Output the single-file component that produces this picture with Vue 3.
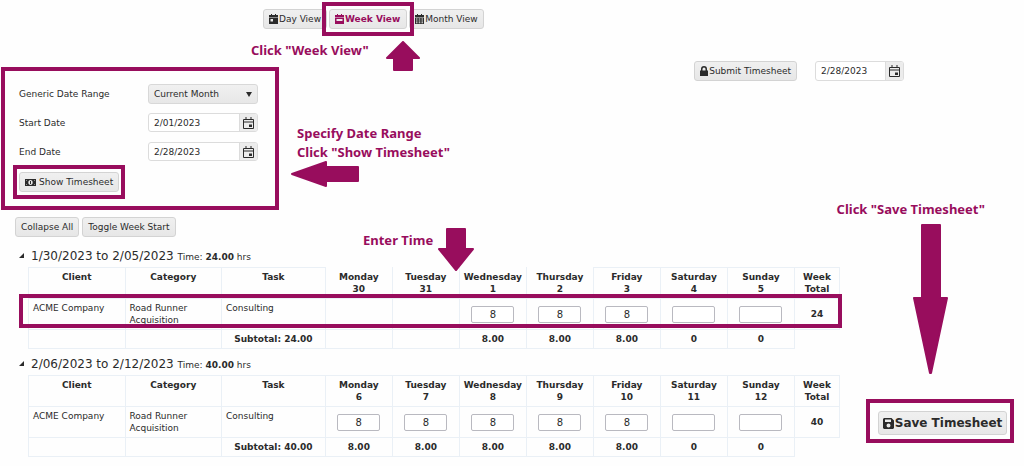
<script setup>
import { ref } from 'vue'

const range = ref('Current Month')
const startDate = ref('2/01/2023')
const endDate = ref('2/28/2023')
const submitDate = ref('2/28/2023')
const dayNames = ['Monday', 'Tuesday', 'Wednesday', 'Thursday', 'Friday', 'Saturday', 'Sunday']

const weeks = ref([
  {
    id: 'w1', title: '1/30/2023 to 2/05/2023', total: '24', hours: '24.00', marked: true,
    dates: [30, 31, 1, 2, 3, 4, 5],
    entries: [null, null, '8', '8', '8', '', ''],
    sums: ['', '', '8.00', '8.00', '8.00', '0', '0'],
  },
  {
    id: 'w2', title: '2/06/2023 to 2/12/2023', total: '40', hours: '40.00', marked: false,
    dates: [6, 7, 8, 9, 10, 11, 12],
    entries: ['8', '8', '8', '8', '8', '', ''],
    sums: ['8.00', '8.00', '8.00', '8.00', '8.00', '0', '0'],
  },
])
</script>

<template>
  <main class="page">
    <nav class="views">
      <button class="btn" type="button">
        <svg class="icon" viewBox="0 0 9 10"><path fill-rule="evenodd" d="M0 1h2V0h1v1h3V0h1v1h2v2H0zM0 3.5h9V10H0zM1.5 5v2.5H4V5z" /></svg>Day View
      </button>
      <button class="btn active marked" type="button">
        <svg class="icon" viewBox="0 0 9 10"><path fill-rule="evenodd" d="M0 1h2V0h1v1h3V0h1v1h2v2H0zM0 3.5h9V10H0zM1.5 5v2h6V5z" /></svg>Week View
      </button>
      <button class="btn" type="button">
        <svg class="icon" viewBox="0 0 9 10"><path fill-rule="evenodd" d="M0 1h2V0h1v1h3V0h1v1h2v2H0zM0 3.5h9V10H0zM1 4.5v1h1.5v-1zm2.7 0v1h1.6v-1zm2.8 0v1H8v-1zM1 6.5v1h1.5v-1zm2.7 0v1h1.6v-1zm2.8 0v1H8v-1zM1 8.3v.9h1.5v-.9zm2.7 0v.9h1.6v-.9zm2.8 0v.9H8v-.9z" /></svg>Month View
      </button>
    </nav>

    <section class="top">
      <form class="filters" @submit.prevent>
        <div class="field">
          <label for="range">Generic Date Range</label>
          <div class="select-wrap">
            <select id="range" v-model="range">
              <option>Current Month</option>
            </select>
            <svg class="caret" viewBox="0 0 6 5"><path d="M0 0h6L3 5z" /></svg>
          </div>
        </div>
        <div class="field">
          <label for="start">Start Date</label>
          <div class="date">
            <input id="start" v-model="startDate" type="text" />
            <button type="button" aria-label="Pick start date">
              <svg viewBox="0 0 11 12"><path class="line" d="M.5 2.5h10v9H.5zM.5 5h10M3 0v3M8 0v3" /><path d="M6 7.5h3V10H6z" /></svg>
            </button>
          </div>
        </div>
        <div class="field">
          <label for="end">End Date</label>
          <div class="date">
            <input id="end" v-model="endDate" type="text" />
            <button type="button" aria-label="Pick end date">
              <svg viewBox="0 0 11 12"><path class="line" d="M.5 2.5h10v9H.5zM.5 5h10M3 0v3M8 0v3" /><path d="M6 7.5h3V10H6z" /></svg>
            </button>
          </div>
        </div>
        <button class="btn show marked" type="submit">
          <svg class="icon money" viewBox="0 0 11 7"><path fill-rule="evenodd" d="M0 0h11v7H0zM1 1v1l1-1zm9 0H9l1 1zM1 6h1L1 5zm9 0V5L9 6zM5.5 1C4.100 1 3.300 2.200 3.300 3.500S4.100 6 5.500 6s2.200-1.200 2.200-2.500S6.900 1 5.500 1z" /><path d="M5 2h1v3H5z" /></svg>Show Timesheet
        </button>
      </form>

      <div class="submit">
        <button class="btn" type="button">
          <svg class="icon lock" viewBox="0 0 8 10"><path fill-rule="evenodd" d="M0 4.500h1V3a3 3 0 0 1 6 0v1.500h1V10H0zM2.500 4.500h3V3a1.500 1.500 0 0 0-3 0z" /></svg>Submit Timesheet
        </button>
        <div class="date">
          <input v-model="submitDate" type="text" aria-label="Submit date" />
          <button type="button" aria-label="Pick submit date">
            <svg viewBox="0 0 11 12"><path class="line" d="M.5 2.5h10v9H.5zM.5 5h10M3 0v3M8 0v3" /><path d="M6 7.5h3V10H6z" /></svg>
          </button>
        </div>
      </div>
    </section>

    <div class="tools">
      <button class="btn" type="button">Collapse All</button>
      <button class="btn" type="button">Toggle Week Start</button>
    </div>

    <div class="body">
      <div class="weeks">
        <section v-for="week in weeks" :key="week.id" class="week">
          <h2>
            <svg class="toggle" viewBox="0 0 5 5"><path d="M5 0v5H0z" /></svg>
            {{ week.title }} <small>Time: <b>{{ week.hours }}</b> hrs</small>
          </h2>
          <div class="sheet">
            <table>
              <colgroup>
                <col class="c-name" /><col class="c-name" /><col class="c-task" />
                <col v-for="d in dayNames" :key="d" /><col class="c-total" />
              </colgroup>
              <thead>
                <tr>
                  <th>Client</th><th>Category</th><th>Task</th>
                  <th v-for="(d, i) in dayNames" :key="d" :class="{ bare: week.marked && i < 4 }">{{ d }}<br />{{ week.dates[i] }}</th>
                  <th>Week<br />Total</th>
                </tr>
              </thead>
              <tbody>
                <tr class="entry">
                  <td>ACME Company</td><td>Road Runner Acquisition</td><td>Consulting</td>
                  <td v-for="(d, i) in dayNames" :key="d" class="num">
                    <input v-if="week.entries[i] !== null" v-model="week.entries[i]" type="text" :aria-label="d + ' hours'" />
                  </td>
                  <td class="num">{{ week.total }}</td>
                </tr>
                <tr class="sum">
                  <td></td><td></td><td class="num">Subtotal: {{ week.hours }}</td>
                  <td v-for="(d, i) in dayNames" :key="d" class="num">{{ week.sums[i] }}</td>
                  <td class="none"></td>
                </tr>
              </tbody>
            </table>
            <div v-if="week.marked" class="row-mark"></div>
          </div>
        </section>
      </div>
      <div class="save">
        <button class="btn" type="button">
          <svg class="icon disk" viewBox="0 0 11 11"><path fill-rule="evenodd" d="M1 0h7.500L11 2.500V10l-1 1H1l-1-1V1zM2 1.500V4h6V1.500zM5.500 5.500a2 2 0 1 0 0 4 2 2 0 0 0 0-4z" /></svg>Save Timesheet
        </button>
      </div>
    </div>

    <p class="note n-week">Click "Week View"</p>
    <svg class="arrow a-week" viewBox="0 0 34 30"><path d="M17 1 33 17H26V29H8V17H1z" /></svg>
    <p class="note n-range">Specify Date Range<br />Click "Show Timesheet"</p>
    <svg class="arrow a-range" viewBox="0 0 68 26"><path d="M1 13 35 1V6H67V20H35V25z" /></svg>
    <p class="note n-time">Enter Time</p>
    <svg class="arrow a-time" viewBox="0 0 36 43"><path d="M9 1H27V21H35L18 42 1 21H9z" /></svg>
    <p class="note n-save">Click "Save Timesheet"</p>
    <svg class="arrow a-save" viewBox="0 0 35 150"><path d="M9 1H27V74H34L18 149H17L1 74H9z" /></svg>
  </main>
</template>

<style>
body {
  margin: 0;
  background: #fefefe;
}
</style>

<style scoped>
.page {
  --mark: #980d5d;
  --line: #eaf0f6;
  position: relative;
  box-sizing: border-box;
  padding-top: 9px;
  color: #2b2b2b;
  font: 9px/12px "DejaVu Sans", sans-serif;
}
.page * { box-sizing: border-box; }
button, input, select { font: inherit; color: inherit; margin: 0; }
svg { display: block; fill: currentColor; flex: none; }
.btn {
  display: inline-flex;
  align-items: center;
  justify-content: center;
  gap: 1px;
  height: 20px;
  padding: 0 5px;
  border: 1px solid #d3d3d3;
  border-radius: 3px;
  background: linear-gradient(#f0f0f0, #e7e7e7);
  white-space: nowrap;
}
.icon { width: 9px; height: 10px; }
.marked { position: relative; }
.marked::after {
  content: "";
  position: absolute;
  inset: -8px;
  border: 4px solid var(--mark);
  pointer-events: none;
}
.views { display: flex; gap: 2px; padding-left: 263px; }
.views .active { padding-right: 6px; color: var(--mark); font-weight: bold; z-index: 1; }
.top {
  display: flex;
  justify-content: space-between;
  align-items: flex-start;
  margin-top: 32px;
  padding: 0 120px 0 1px;
}
.filters {
  display: flex;
  flex-direction: column;
  align-items: flex-start;
  gap: 10px;
  width: 278px;
  margin-top: 6px;
  padding: 13px 17px 14px 14px;
  border: 4px solid var(--mark);
}
.field {
  display: flex;
  align-items: center;
  justify-content: space-between;
  align-self: stretch;
  height: 19px;
}
.select-wrap { position: relative; width: 110px; }
select {
  appearance: none;
  width: 100%;
  height: 20px;
  padding: 0 5px;
  border: 1px solid #d8d8d8;
  border-radius: 3px;
  background: linear-gradient(#f0f0f0, #e7e7e7);
}
.caret { position: absolute; right: 6px; top: 8px; width: 6px; height: 5px; pointer-events: none; }
.date {
  display: flex;
  width: 110px;
  height: 19px;
  border: 1px solid #dcdcdc;
  border-radius: 3px;
  background: #fff;
  overflow: hidden;
}
.date input { flex: 1; min-width: 0; border: 0; padding: 0 5px; background: transparent; }
.date button {
  display: grid;
  place-items: center;
  width: 18px;
  padding: 0;
  border: 0;
  border-left: 1px solid #dcdcdc;
  background: #ececec;
}
.date svg { width: 11px; height: 12px; }
.line { fill: none; stroke: currentColor; }
.show { gap: 3px; margin-top: 1px; }
.show.marked::after { inset: -8px -7px -8px -7px; }
.money { width: 11px; height: 7px; }
.submit { display: flex; gap: 18px; }
.submit .date { width: 89px; height: 20px; }
.lock { width: 8px; }
.tools { display: flex; gap: 3px; margin-top: 7px; padding-left: 15px; }
.body { display: flex; align-items: flex-end; }
.weeks { flex: 1; padding: 10px 26px 0 28px; }
.week { margin-bottom: 6px; }
h2 {
  position: relative;
  margin: 0;
  padding-left: 3px;
  font-size: 12px;
  font-weight: normal;
  line-height: 19px;
}
h2 small { font-size: 9px; }
.toggle { position: absolute; left: -9px; top: 6px; width: 5px; height: 5px; }
.sheet { position: relative; }
table { width: 100%; table-layout: fixed; border-collapse: collapse; }
.c-name { width: 11.9%; }
.c-task { width: 12.8%; }
.c-total { width: 45px; }
th, td { border: 1px solid var(--line); padding: 3px; vertical-align: top; text-align: left; }
th { height: 31px; padding: 3px 0; text-align: center; }
th.bare { border-top-color: transparent; }
.entry { height: 31px; }
.entry td { padding: 3px 4px; }
.num, .sum .num { text-align: center; vertical-align: middle; font-weight: bold; padding: 0; }
.sum { height: 19px; }
.sum .none { border: 0; }
.num input {
  display: block;
  width: 43px;
  height: 17px;
  margin: 0 auto;
  padding: 0;
  border: 1px solid #b9b9c0;
  border-radius: 2px;
  background: #fff;
  text-align: center;
  font-size: 10px;
  font-weight: normal;
}
.row-mark {
  position: absolute;
  left: -9px;
  right: -2px;
  top: 27px;
  height: 34px;
  border: 4px solid var(--mark);
  pointer-events: none;
}
.save {
  width: 148px;
  margin: 0 10px 20px 0;
  padding: 8px 3px 4px 8px;
  border: 4px solid var(--mark);
}
.save .btn { width: 100%; height: 24px; padding: 0; font-size: 12px; font-weight: bold; }
.disk { width: 11px; height: 11px; }
.note {
  position: absolute;
  margin: 0;
  color: var(--mark);
  font: 700 13px/19px "Noto Sans", sans-serif;
  white-space: nowrap;
}
.arrow { position: absolute; fill: var(--mark); stroke: var(--mark); stroke-width: 2px; stroke-linejoin: round; }
.n-week { left: 251px; top: 41px; }
.a-week { left: 386px; top: 41px; width: 34px; height: 30px; }
.n-range { left: 297px; top: 124px; }
.a-range { left: 291px; top: 161px; width: 68px; height: 26px; }
.n-time { left: 363px; top: 231px; }
.a-time { left: 438px; top: 228px; width: 36px; height: 43px; }
.n-save { right: 39px; top: 200px; }
.a-save { right: 76px; top: 224px; width: 35px; height: 150px; }
</style>
